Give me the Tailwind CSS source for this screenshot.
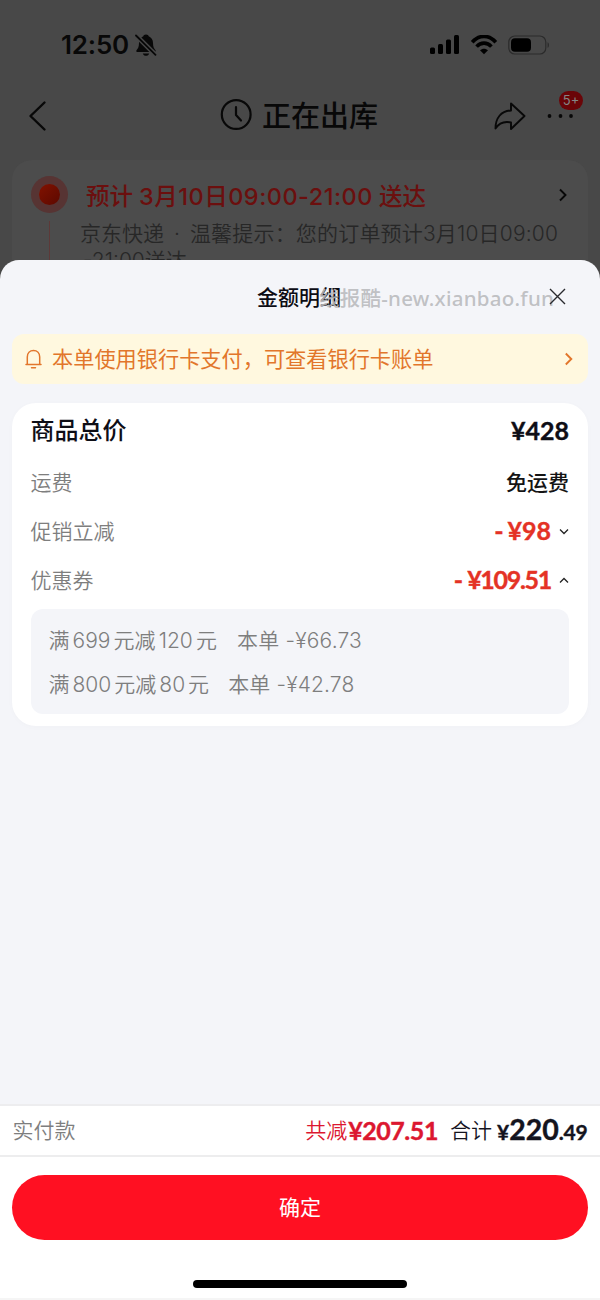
<!DOCTYPE html>
<html lang="zh-CN">
<head>
<meta charset="utf-8">
<title>金额明细</title>
<script src="https://cdn.jsdelivr.net/npm/@tailwindcss/browser@4"></script>
</head>
<body class="w-[600px] h-[1300px] overflow-hidden bg-[#484848] font-['Inter','Noto_Sans_CJK_SC',sans-serif] whitespace-nowrap">
<div class="w-[600px] h-[1300px] flex flex-col">
  <header class="h-[260px] shrink-0 overflow-hidden flex flex-col text-[#080808]">
    <div class="h-[90px] shrink-0 pl-[61px] pr-[50px] flex items-center justify-between">
      <div class="flex items-center gap-[6px]">
        <span class="text-[26px] leading-none font-semibold tracking-[-0.2px]">12:50</span>
        <svg class="w-[22px] h-[24px]" viewBox="0 0 22 24"><path d="M11 1.500c-1.600 0-2.400.8-2.700 1.800C5.400 4.500 4 7 4 10c0 4-1 5.500-2.300 7-.9 1.200-.4 2 .6 2h17.400c1 0 1.500-.8.6-2C19 15.500 18 14 18 10c0-3-1.400-5.500-4.300-6.700-.3-1-1.100-1.800-2.700-1.800zM7.800 20.500h6.400c-.5 1.500-1.700 2.300-3.200 2.300s-2.700-.8-3.200-2.300z" fill="#080808"/><path d="M1 2.500 20.500 21.800" stroke="#484848" stroke-width="4.600"/><path d="M1 2.500 20.500 21.800" stroke="#080808" stroke-width="1.800" stroke-linecap="round"/></svg>
      </div>
      <div class="flex items-center">
        <svg class="w-[31px] h-[20px]" viewBox="0 0 31 20" fill="#000"><rect x="1" y="12.500" width="5" height="6.500" rx="1.500"/><rect x="9" y="9" width="5" height="10" rx="1.500"/><rect x="17" y="4.500" width="5" height="14.500" rx="1.500"/><rect x="25" y="0" width="5" height="19" rx="1.500"/></svg>
        <svg class="w-[28px] h-[20px] ml-[10px]" viewBox="0 0 28 20" fill="none" stroke="#000"><path d="M2.200 7.200C9-.6 19-.6 25.800 7.200M6.600 11.600c4.200-4.600 10.600-4.600 14.800 0" stroke-width="3.600"/><path d="M14 19.200l-4-4c2.300-2.100 5.700-2.100 8 0z" fill="#000" stroke="none"/></svg>
        <svg class="w-[42px] h-[20px] ml-[10px]" viewBox="0 0 42 20"><rect x=".8" y="1" width="37" height="18" rx="6" fill="none" stroke="#2b2b2b" stroke-width="1.200"/><rect x="3" y="3.200" width="20" height="13.600" rx="4" fill="#000"/><path d="M39.700 7.200c1.400.6 1.400 5 0 5.600z" fill="#232323"/></svg>
      </div>
    </div>
    <div class="h-[52px] shrink-0 flex items-center pl-[28px] pr-[25px] relative">
      <svg class="w-[20px] h-[32px]" viewBox="0 0 20 32" fill="none" stroke="#080808" stroke-width="2.400" stroke-linecap="round" stroke-linejoin="round"><path d="M16.500 2.500 2.500 16l14 13.500"/></svg>
      <div class="ml-[172px] flex items-center gap-[9px]">
        <svg class="w-[33px] h-[33px] -mt-[4px]" viewBox="0 0 33 33" fill="none" stroke="#080808" stroke-width="2.200" stroke-linecap="round" stroke-linejoin="round"><circle cx="16.200" cy="16.500" r="14.400"/><path d="M16 9.200V17l5 5.500"/></svg>
        <span class="text-[29px] leading-[40px] font-medium pt-[2px]">正在出库</span>
      </div>
      <svg class="w-[32px] h-[28px] ml-auto mr-[21px]" viewBox="0 0 32 28" fill="none" stroke="#080808" stroke-width="1.900" stroke-linejoin="round"><path d="M17 1.500 30.500 14 17 27v-6.500C10 19 5 21 1.500 26.500 1.500 16 7 9 17 8.500z"/></svg>
      <svg class="w-[28px] h-[6px]" viewBox="0 0 28 6" fill="#080808"><circle cx="2.500" cy="3" r="1.900"/><circle cx="13.500" cy="3" r="1.900"/><circle cx="24" cy="3" r="1.900"/></svg>
      <span class="absolute left-[559px] top-[1px] w-[24px] h-[19px] rounded-full bg-[#6a0508] text-[#858585] text-[13px] leading-[19px] text-center">5+</span>
    </div>
    <div class="mt-[18px] mx-[12px] h-[140px] shrink-0 rounded-[20px] bg-[#4c4c4c] flex">
      <div class="w-[67px] flex flex-col items-center pl-[7px] pt-[16px] shrink-0">
        <div class="w-[37px] h-[37px] rounded-full bg-[#573433] flex items-center justify-center"><div class="w-[21px] h-[21px] rounded-full bg-linear-to-br from-[#821200] to-[#5c0900]"></div></div>
        <div class="w-px h-[60px] mt-[8px] bg-[#5d3938]"></div>
      </div>
      <div class="flex-1 flex flex-col">
        <div class="h-[34px] mt-[20px] pl-[7px] pr-[20px] flex items-center justify-between">
          <span class="text-[23.500px] font-medium text-[#6b0f0e] flex gap-[6px]"><span>预计</span><span class="tracking-[0.500px]">3月10日09:00-21:00</span><span>送达</span></span>
          <svg class="w-[10px] h-[14px] -mt-[4px]" viewBox="0 0 10 14" fill="none" stroke="#080808" stroke-width="1.900"><path d="M2 1.500 7.500 7 2 12.500"/></svg>
        </div>
        <div class="h-[44px] pt-[6px] pl-[1px] text-[21px] leading-[27px] font-[350] text-[#272727]"><span>京东快递</span><span class="mx-[10px]">·</span><span class="tracking-[0.180px]">温馨提示：您的订单预计3月10日09:00</span><br><span class="ml-[3px]">-21:00送达</span></div>
      </div>
    </div>
  </header>

  <main class="flex-1 rounded-t-[19px] bg-[#f4f5f9] overflow-hidden flex flex-col">
    <div class="h-[74px] shrink-0 relative flex items-center justify-center">
      <h1 class="text-[21px] font-medium text-[#0c0c14] pt-[2px] pr-[2px]">金额明细</h1>
      <span class="absolute left-[319px] top-[24px] text-[20.500px] leading-[28px] tracking-[0.250px] font-medium text-[#b9babd]/90 font-['Noto_Sans','Noto_Sans_CJK_SC',sans-serif]">线报酷-new.xianbao.fun</span>
      <svg class="absolute left-[549px] top-[28px] w-[17px] h-[17px]" viewBox="0 0 17 17" stroke="#292a2e" stroke-width="1.400"><path d="M1 1 16 16M16 1 1 16"/></svg>
    </div>
    <div class="h-[50px] shrink-0 mx-[12px] rounded-[12px] bg-[#fff8df] flex items-center pl-[13px] pr-[14px] text-[#e2762b]">
      <svg class="w-[17px] h-[20px]" viewBox="0 0 17 20" fill="none" stroke="currentColor" stroke-width="1.500" stroke-linecap="round"><path d="M1 15.500h15M2.300 15.500V8c0-4 2.600-6.500 6.200-6.500s6.200 2.500 6.200 6.500v7.500M6.500 18.800h4"/></svg>
      <span class="ml-[10px] pt-[2px] text-[21.200px]">本单使用银行卡支付，可查看银行卡账单</span>
      <svg class="w-[9px] h-[14px] ml-auto mr-[1px]" viewBox="0 0 9 14" fill="none" stroke="currentColor" stroke-width="1.900"><path d="M1.800 1.500 7.300 7l-5.500 5.500"/></svg>
    </div>
    <section class="mt-[19px] mx-[12px] rounded-[24px] bg-white pl-[18.500px] pr-[19px] pb-[12px] shadow-[0_1px_6px_rgba(0,0,0,0.02)] text-[21px] font-[350] text-[#7e7e7e]">
      <div class="h-[54px] pt-[2px] flex items-center justify-between text-[#0e0e16]">
        <span class="text-[24px] font-medium">商品总价</span>
        <span class="text-[25px] font-bold font-['Lato'] [-webkit-text-stroke:0.400px_#0e0e16]">¥428</span>
      </div>
      <div class="h-[50px] pt-[2px] flex items-center justify-between"><span>运费</span><span class="font-medium text-[#141414]">免运费</span></div>
      <div class="h-[48px] flex items-center justify-between"><span class="pt-[2px]">促销立减</span>
        <span class="flex items-center"><span class="text-[25px] font-bold font-['Lato'] text-[#e43225] flex gap-[4px] [-webkit-text-stroke:0.400px_#e43225]"><span>-</span><span>¥98</span></span>
        <svg class="w-[10px] h-[7px] ml-[8px]" viewBox="0 0 10 7" fill="none" stroke="#222" stroke-width="1.300"><path d="M1 1.500 5 5.500 9 1.500"/></svg></span>
      </div>
      <div class="h-[50px] flex items-center justify-between"><span class="pt-[2px]">优惠券</span>
        <span class="flex items-center"><span class="text-[25px] font-bold font-['Lato'] text-[#e43225] flex gap-[4px] [-webkit-text-stroke:0.400px_#e43225]"><span>-</span><span class="tracking-[-1.300px]">¥109.51</span></span>
        <svg class="w-[10px] h-[7px] ml-[8px]" viewBox="0 0 10 7" fill="none" stroke="#222" stroke-width="1.300"><path d="M1 5.500 5 1.500 9 5.500"/></svg></span>
      </div>
      <div class="mt-[4px] h-[105px] rounded-[12px] bg-[#f4f5f9] pt-[10px] pl-[18px]">
        <div class="h-[44px] flex items-center"><span class="[word-spacing:-2.800px]">满 699 元减 120 元</span><span class="ml-[20px] tracking-[0.200px]">本单 -¥66.73</span></div>
        <div class="h-[44px] flex items-center"><span class="[word-spacing:-2.900px]">满 800 元减 80 元</span><span class="ml-[19px] tracking-[0.150px]">本单 -¥42.78</span></div>
      </div>
    </section>
  </main>

  <footer class="h-[196px] shrink-0 bg-white border-t-2 border-[#ededef] flex flex-col">
    <div class="h-[51px] shrink-0 px-[12.500px] flex items-center border-b-2 border-[#ededee] text-[21px] font-[350]">
      <span class="text-[#7e7e7e]">实付款</span>
      <span class="ml-auto flex items-center text-[#dc1730]"><span>共减</span><span class="ml-[1px] font-['Lato'] font-bold text-[25px] tracking-[-0.450px] [-webkit-text-stroke:0.400px_#dc1730]">¥207.51</span></span>
      <span class="ml-[12px] flex items-center text-[#14141e]"><span>合计</span><span class="ml-[5px] flex items-baseline font-['Lato'] font-bold text-[21px] [-webkit-text-stroke:0.400px_#14141e] -mt-[1px]"><span>¥</span><span class="text-[28.500px] leading-[34px]">220</span><span class="tracking-[-0.200px]">.49</span></span></span>
    </div>
    <button class="mt-[18px] mx-[12px] h-[65px] pt-[1px] shrink-0 rounded-full bg-[#ff1022] text-white text-[21px]">确定</button>
    <div class="mt-[40px] mx-auto w-[214px] h-[8px] shrink-0 rounded-full bg-black"></div>
    <div class="mt-auto h-[2px] bg-[#f5f5f5]"></div>
  </footer>
</div>
</body>
</html>
